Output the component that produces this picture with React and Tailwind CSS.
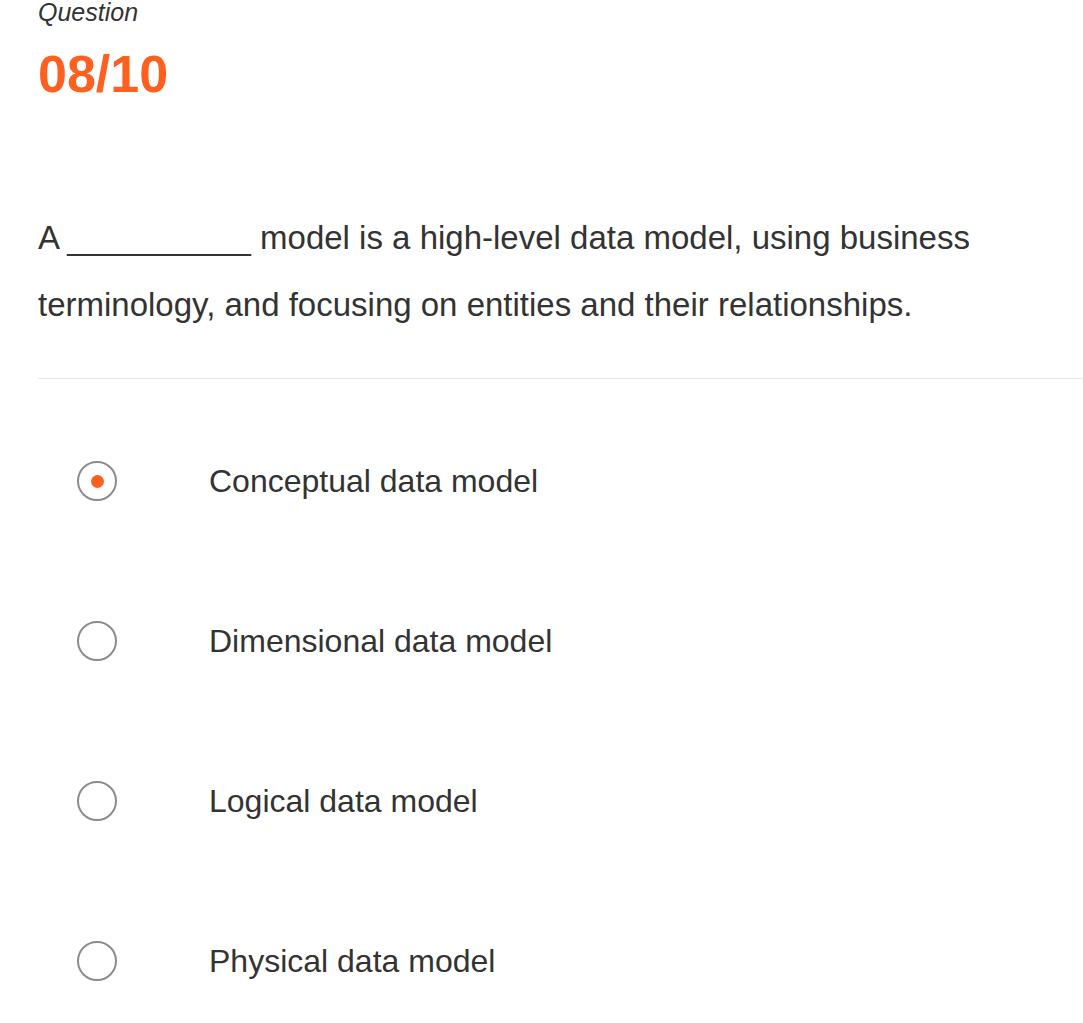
import { useState } from "react";

const options = [
  "Conceptual data model",
  "Dimensional data model",
  "Logical data model",
  "Physical data model",
];

export default function App() {
  const [selected, setSelected] = useState(0);

  return (
    <div className="min-h-screen bg-white pl-[38px] text-[#333333] font-['Liberation_Sans',Arial,sans-serif]">
      <div className="text-[25px] leading-[25px] italic">Question</div>
      <div className="mt-[24px] text-[52px] leading-[50px] font-bold text-[#ff5f1f]">08/10</div>

      <p className="mt-[105px] pr-[30px] text-[33px] leading-[67px]">
        A __________ model is a high-level data model, using business terminology, and focusing on entities and their relationships.
      </p>

      <div className="mt-[40px] h-px bg-[#e6e6e6]" />

      <ul className="mt-[22px]">
        {options.map((opt, i) => (
          <li
            key={opt}
            onClick={() => setSelected(i)}
            className="flex h-[160px] cursor-pointer items-center"
          >
            <span className="ml-[39px] flex h-[40px] w-[40px] shrink-0 items-center justify-center rounded-full border-2 border-[#8c8c8c]">
              {selected === i && <span className="h-[13px] w-[13px] rounded-full bg-[#ff5f1f]" />}
            </span>
            <span className="ml-[92px] text-[32px] leading-[40px]">{opt}</span>
          </li>
        ))}
      </ul>
    </div>
  );
}
